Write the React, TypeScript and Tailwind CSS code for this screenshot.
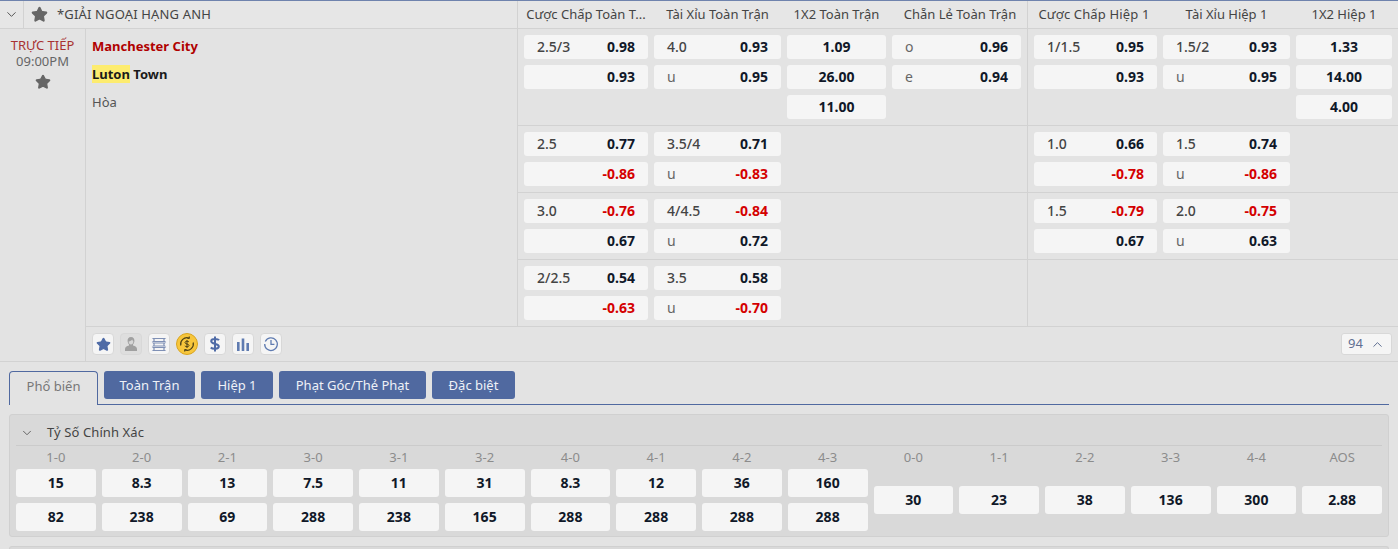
import React from 'react';
import { ChevronDown, ChevronUp, Star } from 'lucide-react';

const FONT = "font-['Noto_Sans','Open_Sans',sans-serif]";

// column widths in the order they appear: full match, then first half
const FULL = ['w-[124px]', 'w-[127px]', 'w-[99px]', 'w-[129px]'];
const HALF = ['w-[123px]', 'w-[127px]', 'w-[96px]'];

type Cell = { label?: string; odds: string } | null;

const headFull = ['Cược Chấp Toàn T...', 'Tài Xỉu Toàn Trận', '1X2 Toàn Trận', 'Chẵn Lẻ Toàn Trận'];
const headHalf = ['Cược Chấp Hiệp 1', 'Tài Xỉu Hiệp 1', '1X2 Hiệp 1'];

const rows: { full: Cell[][]; half: Cell[][] }[] = [
  {
    full: [
      [{ label: '2.5/3', odds: '0.98' }, { odds: '0.93' }],
      [{ label: '4.0', odds: '0.93' }, { label: 'u', odds: '0.95' }],
      [{ odds: '1.09' }, { odds: '26.00' }, { odds: '11.00' }],
      [{ label: 'o', odds: '0.96' }, { label: 'e', odds: '0.94' }],
    ],
    half: [
      [{ label: '1/1.5', odds: '0.95' }, { odds: '0.93' }],
      [{ label: '1.5/2', odds: '0.93' }, { label: 'u', odds: '0.95' }],
      [{ odds: '1.33' }, { odds: '14.00' }, { odds: '4.00' }],
    ],
  },
  {
    full: [
      [{ label: '2.5', odds: '0.77' }, { odds: '-0.86' }],
      [{ label: '3.5/4', odds: '0.71' }, { label: 'u', odds: '-0.83' }],
      [],
      [],
    ],
    half: [
      [{ label: '1.0', odds: '0.66' }, { odds: '-0.78' }],
      [{ label: '1.5', odds: '0.74' }, { label: 'u', odds: '-0.86' }],
      [],
    ],
  },
  {
    full: [
      [{ label: '3.0', odds: '-0.76' }, { odds: '0.67' }],
      [{ label: '4/4.5', odds: '-0.84' }, { label: 'u', odds: '0.72' }],
      [],
      [],
    ],
    half: [
      [{ label: '1.5', odds: '-0.79' }, { odds: '0.67' }],
      [{ label: '2.0', odds: '-0.75' }, { label: 'u', odds: '0.63' }],
      [],
    ],
  },
  {
    full: [
      [{ label: '2/2.5', odds: '0.54' }, { odds: '-0.63' }],
      [{ label: '3.5', odds: '0.58' }, { label: 'u', odds: '-0.70' }],
      [],
      [],
    ],
    half: [[], [], []],
  },
];

const scores: { label: string; odds: string[] }[] = [
  { label: '1-0', odds: ['15', '82'] },
  { label: '2-0', odds: ['8.3', '238'] },
  { label: '2-1', odds: ['13', '69'] },
  { label: '3-0', odds: ['7.5', '288'] },
  { label: '3-1', odds: ['11', '238'] },
  { label: '3-2', odds: ['31', '165'] },
  { label: '4-0', odds: ['8.3', '288'] },
  { label: '4-1', odds: ['12', '288'] },
  { label: '4-2', odds: ['36', '288'] },
  { label: '4-3', odds: ['160', '288'] },
  { label: '0-0', odds: ['30'] },
  { label: '1-1', odds: ['23'] },
  { label: '2-2', odds: ['38'] },
  { label: '3-3', odds: ['136'] },
  { label: '4-4', odds: ['300'] },
  { label: 'AOS', odds: ['2.88'] },
];

function OddsBox({ cell }: { cell: Cell }) {
  if (!cell) return null;
  const negative = cell.odds.startsWith('-');
  return (
    <div className={`flex h-6 items-center rounded-[3px] bg-[#f5f5f5] px-[13px] pb-px text-[14px] ${cell.label ? 'justify-between' : 'justify-end'}`}>
      {cell.label && <span className={cell.label.length === 1 ? 'text-[#666]' : 'font-medium text-[#444]'}>{cell.label}</span>}
      <span className={`font-bold ${negative ? 'text-[#d40000]' : 'text-[#101828]'}`}>{cell.odds}</span>
    </div>
  );
}

function CenterBox({ cell }: { cell: Cell }) {
  if (!cell) return null;
  return <div className="flex h-6 items-center justify-center rounded-[3px] bg-[#f5f5f5] pb-px text-[14px] font-bold text-[#101828]">{cell.odds}</div>;
}

function OddsGroup({ cols, widths, center, last }: { cols: Cell[][]; widths: string[]; center: number; last?: boolean }) {
  return (
    <div className={`flex gap-[6px] px-[6px] py-[6px] ${last ? '' : 'border-r border-[#d2d2d2]'}`}>
      {cols.map((cells, i) => (
        <div key={i} className={`flex flex-col gap-[6px] ${widths[i]}`}>
          {cells.map((c, j) => (i === center ? <CenterBox key={j} cell={c} /> : <OddsBox key={j} cell={c} />))}
        </div>
      ))}
    </div>
  );
}

function HeadGroup({ labels, widths, last }: { labels: string[]; widths: string[]; last?: boolean }) {
  return (
    <div className={`flex gap-[6px] px-[6px] ${last ? '' : 'border-r border-[#d2d2d2]'}`}>
      {labels.map((l, i) => (
        <div key={l} className={`${widths[i]} whitespace-nowrap text-center text-[13px] leading-[27px] text-[#444] ${l.startsWith('Chẵn') ? 'pl-[7px]' : ''} ${l === 'Cược Chấp Hiệp 1' ? 'pr-[3px] tracking-[0.15px]' : ''}`}>{l}</div>
      ))}
    </div>
  );
}

function IconBtn({ children, muted }: { children: React.ReactNode; muted?: boolean }) {
  return (
    <div className={`flex h-[22px] w-[22px] items-center justify-center rounded-[4px] border border-[#d8d8d8] ${muted ? 'bg-[#dedede]' : 'bg-[#f5f5f5]'}`}>
      {children}
    </div>
  );
}

function ActionIcons() {
  return (
    <div className="flex items-center gap-[6px]">
      <IconBtn><Star size={15} fill="#4f6ba6" stroke="#4f6ba6" /></IconBtn>
      <IconBtn muted>
        <svg width="14" height="16" viewBox="0 0 14 16">
          <path d="M7 1C4.6 1 3.4 2.7 3.6 5c.1 1.5.6 2.6 1.4 3.4v1.2c-2.4.5-4 1.6-4 3.4v2h12v-2c0-1.8-1.600-2.900-4-3.400V8.400c.8-.8 1.300-1.900 1.400-3.400C10.600 2.700 9.400 1 7 1z" fill="#a0a0a0" />
          <path d="M4.600 5.500c1.500-.2 3-1 3.600-2 .4 1 1 1.700 1.200 2-.1 2-1.100 3-2.400 3S4.700 7.300 4.600 5.500z" fill="#d6d6d6" />
        </svg>
      </IconBtn>
      <IconBtn>
        <svg width="16" height="15" viewBox="0 0 16 15" fill="none" stroke="#7f90b5" strokeWidth="1.2">
          <path d="M2.500 1.500h11c-.8.600-.8 2.400 0 3h-11c.8-.6.800-2.400 0-3z" />
          <path d="M2.500 6h11c-.8.600-.8 2.400 0 3h-11c.8-.6.800-2.400 0-3z" />
          <path d="M2.500 10.500h11c-.8.600-.8 2.400 0 3h-11c.8-.6.800-2.400 0-3z" />
        </svg>
      </IconBtn>
      <div className="flex h-[22px] w-[22px] items-center justify-center rounded-full border border-[#d9a520] bg-[#f7c63c]">
        <svg width="18" height="18" viewBox="0 0 18 18" fill="none" stroke="#4d4016" strokeWidth="1.2">
          <path d="M2.800 10.500A6.400 6.400 0 0 1 11 3" />
          <path d="M15.200 7.500A6.400 6.400 0 0 1 7 15" />
          <path d="M11.300 1.500 11.200 3.300 9.400 3.500M6.700 16.500l.1-1.800 1.800-.2" />
          <path d="M11 7c-.5-1-4-1.300-4 .6 0 1.900 4 1 4 2.900 0 1.700-3.500 1.400-4.200.4M9 5v8" strokeWidth="1" />
        </svg>
      </div>
      <IconBtn>
        <svg width="12" height="16" viewBox="0 0 12 16" fill="none" stroke="#4f6ba6" strokeWidth="2">
          <path d="M10 4.200C9 2.800 2.200 2.200 2.200 5.200c0 3.200 7.600 2 7.600 5.400 0 3-6.600 2.600-8 .9M6 .5v15" />
        </svg>
      </IconBtn>
      <IconBtn>
        <svg width="14" height="13" viewBox="0 0 14 13" fill="#5f7bb0">
          <rect x="1" y="4" width="2.600" height="9" />
          <rect x="5.700" y="0.500" width="2.600" height="12.500" />
          <rect x="10.400" y="5" width="2.600" height="8" />
        </svg>
      </IconBtn>
      <IconBtn>
        <svg width="16" height="16" viewBox="0 0 16 16" fill="none" stroke="#5f7bb0" strokeWidth="1.3">
          <path d="M2.300 5.500A6.300 6.300 0 1 1 1.700 8" />
          <path d="M8 4v4.300h3.400" />
        </svg>
      </IconBtn>
    </div>
  );
}

function Tabs() {
  const others = [
    { t: 'Toàn Trận', w: 'w-[91px]' },
    { t: 'Hiệp 1', w: 'w-[72px]' },
    { t: 'Phạt Góc/Thẻ Phạt', w: 'w-[147px]' },
    { t: 'Đặc biệt', w: 'w-[83px]' },
  ];
  return (
    <div className="mx-[9px] mt-[9px] flex h-[34px] gap-[6px] border-b border-[#5069a0]">
      <div className="h-[34px] w-[89px] rounded-t-[4px] border border-b-0 border-[#5069a0] bg-[#e3e3e3] text-center text-[13px] leading-[28px] text-[#777]">Phổ biến</div>
      {others.map((o) => (
        <div key={o.t} className={`${o.w} h-[28px] rounded-[3px] bg-[#5069a0] text-center text-[13px] leading-[28px] text-[#eef1f7]`}>{o.t}</div>
      ))}
    </div>
  );
}

function ScorePanel() {
  return (
    <div className="mx-[9px] mt-[9px] rounded-[3px] border border-[#d0d0d0] bg-[#d9d9d9] px-[6px] pb-[5px]">
      <div className="flex h-[31px] items-center gap-[13px] border-b border-[#cbcbcb] pl-[4px] pt-[6px] text-[13px] text-[#444]">
        <ChevronDown size={14} strokeWidth={1.5} className="text-[#555]" />
        <span className="tracking-[0.1px]">Tỷ Số Chính Xác</span>
      </div>
      <div className="grid grid-cols-16 gap-x-[6px]">
        {scores.map((s) => (
          <div key={s.label} className="flex flex-col">
            <div className="h-[23px] text-center text-[13px] leading-[22px] text-[#8c8c8c]">{s.label}</div>
            <div className="flex h-[62px] flex-col justify-center gap-[6px]">
              {s.odds.map((o, i) => (
                <div key={i} className="flex h-[28px] items-center justify-center rounded-[3px] bg-[#f5f5f5] pb-px text-[14px] font-bold text-[#101828]">{o}</div>
              ))}
            </div>
          </div>
        ))}
      </div>
    </div>
  );
}

export default function App() {
  return (
    <div className={`${FONT} h-[549px] w-[1398px] overflow-hidden bg-[#e3e3e3]`}>
      <div className="h-px bg-[#6f83ad]" />
      {/* league header */}
      <div className="flex h-[28px] border-b border-[#d2d2d2] bg-[#e6e6e6]">
        <div className="flex w-[518px] items-center border-r border-[#d2d2d2]">
          <div className="flex h-full w-[24px] items-center justify-center border-r border-[#d2d2d2]">
            <ChevronDown size={15} strokeWidth={1.6} className="text-[#555]" />
          </div>
          <Star size={17} fill="#666" stroke="#666" className="ml-[7px]" />
          <span className="ml-[9px] text-[13px] tracking-[0.15px] text-[#444]">*GIẢI NGOẠI HẠNG ANH</span>
        </div>
        <HeadGroup labels={headFull} widths={FULL} />
        <HeadGroup labels={headHalf} widths={HALF} last />
      </div>

      <div className="flex border-b border-[#d2d2d2]">
        {/* time */}
        <div className="flex w-[86px] shrink-0 flex-col items-center border-r border-[#d2d2d2] pt-[8px] text-[13px] leading-[16px]">
          <span className="text-[#a83232]">TRỰC TIẾP</span>
          <span className="text-[#666]">09:00PM</span>
          <Star size={16} fill="#666" stroke="#666" className="mt-[5px]" />
        </div>
        <div className="flex min-w-0 flex-1 flex-col">
          <div className="flex">
            {/* teams */}
            <div className="flex w-[432px] shrink-0 flex-col border-r border-[#d2d2d2] pl-[6px] pt-[7px] text-[13px] leading-[20px]">
              <div className="font-bold text-[#b00000]">Manchester City</div>
              <div className="mt-[8px] font-bold text-[#1a1a1a]"><span className="bg-[#fdec6f]">Luton</span> Town</div>
              <div className="mt-[8px] text-[#555]">Hòa</div>
            </div>
            {/* odds */}
            <div className="flex flex-col">
              {rows.map((r, i) => (
                <div key={i} className={`flex ${i === rows.length - 1 ? '' : 'border-b border-[#d2d2d2]'}`}>
                  <OddsGroup cols={r.full} widths={FULL} center={2} />
                  <OddsGroup cols={r.half} widths={HALF} center={2} last />
                </div>
              ))}
            </div>
          </div>
          {/* actions */}
          <div className="flex h-[35px] items-center justify-between border-t border-[#d2d2d2] pl-[6px] pr-[6px]">
            <ActionIcons />
            <div className="flex h-[22px] w-[51px] items-center justify-center gap-[7px] rounded-[3px] border border-[#d8d8d8] bg-[#f5f5f5] text-[13px] text-[#5f6f92]">
              94 <ChevronUp size={15} strokeWidth={1.6} className="text-[#5f6f92]" />
            </div>
          </div>
        </div>
      </div>

      <Tabs />
      <ScorePanel />
      <div className="mx-[9px] mt-[9px] h-[10px] rounded-t-[3px] border border-b-0 border-[#d0d0d0] bg-[#d9d9d9]" />
    </div>
  );
}
